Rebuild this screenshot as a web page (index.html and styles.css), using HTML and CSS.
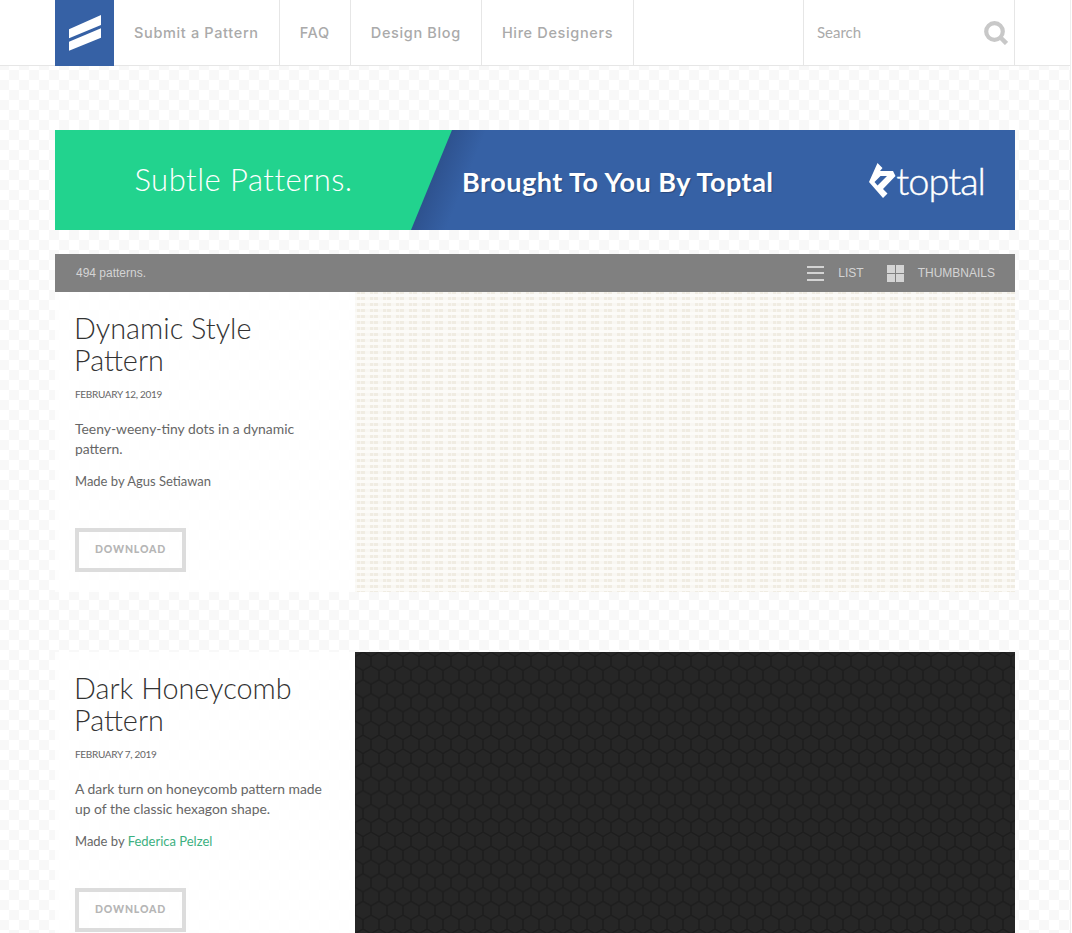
FILE: index.html
```html
<!DOCTYPE html>
<html lang="en">
<head>
<meta charset="utf-8">
<title>Subtle Patterns</title>
<link rel="stylesheet" href="styles.css">
</head>
<body>
<header class="topbar">
  <div class="topbar-inner">
    <a class="logo" href="#" aria-label="Subtle Patterns">
      <svg width="32" height="36" viewBox="0 0 32 36"><path d="M0 14.300 32 0V10L0 23.300ZM0 26.700 32 13.300V22.700L0 35.700Z" fill="#fff"/></svg>
    </a>
    <nav class="mainnav">
      <a href="#">Submit a Pattern</a>
      <a href="#">FAQ</a>
      <a href="#">Design Blog</a>
      <a href="#">Hire Designers</a>
    </nav>
    <div class="search">
      <span class="search-label">Search</span>
      <svg width="24" height="24" viewBox="0 0 24 24"><circle cx="10.500" cy="10.500" r="8.300" fill="none" stroke="#c8c8c8" stroke-width="4.200"/><path d="M16 16 22.500 22.500" stroke="#c8c8c8" stroke-width="4.500"/></svg>
    </div>
  </div>
</header>
<main class="page">
  <section class="banner">
    <div class="banner-left">Subtle Patterns.</div>
    <div class="banner-right">
      <span class="banner-tag">Brought To You By Toptal</span>
      <span class="toptal">
        <svg width="27" height="35" viewBox="3 4 27 35"><path fill-rule="evenodd" d="M11.500 4 16.500 9 14 12H27L29.500 17 17 30 21.500 34.500 17 39 3 23ZM14.500 17 8.500 23 11.500 26.500 21 17Z" fill="#fff"/></svg>
        <span class="toptal-word">toptal</span>
      </span>
    </div>
  </section>
  <section class="toolbar">
    <span class="count">494 patterns.</span>
    <div class="views">
      <span class="view">
        <svg width="17" height="15" viewBox="0 0 17 15"><path d="M0 0H17V2H0ZM0 6H17V8H0ZM0 13H17V15H0Z" fill="#d4d4d4"/></svg>
        LIST
      </span>
      <span class="view">
        <svg width="17" height="17" viewBox="0 0 17 17"><path d="M0 0H8V8H0ZM9 0H17V8H9ZM0 9H8V17H0ZM9 9H17V17H9Z" fill="#d4d4d4"/></svg>
        THUMBNAILS
      </span>
    </div>
  </section>
  <article class="pattern">
    <div class="info">
      <h2>Dynamic Style Pattern</h2>
      <p class="date">FEBRUARY 12, 2019</p>
      <p class="desc">Teeny-weeny-tiny dots in a dynamic pattern.</p>
      <p class="author">Made by Agus Setiawan</p>
      <a class="download" href="#">DOWNLOAD</a>
    </div>
    <div class="swatch dots"></div>
  </article>
  <article class="pattern">
    <div class="info">
      <h2>Dark Honeycomb Pattern</h2>
      <p class="date">FEBRUARY 7, 2019</p>
      <p class="desc">A dark turn on honeycomb pattern made up of the classic hexagon shape.</p>
      <p class="author">Made by <a href="#">Federica Pelzel</a></p>
      <a class="download" href="#">DOWNLOAD</a>
    </div>
    <div class="swatch honey">
      <svg width="660" height="300">
        <defs>
          <pattern id="hex" width="16" height="27.700" patternUnits="userSpaceOnUse">
            <path d="M0 4.600 8 0 16 4.600M0 4.600V13.800L8 18.500 16 13.800V4.600M8 18.500V27.700" fill="none" stroke="#1d1d1d" stroke-width="1.500"/>
          </pattern>
        </defs>
        <rect width="660" height="300" fill="url(#hex)"/>
      </svg>
    </div>
  </article>
</main>
</body>
</html>
```
FILE: styles.css
```css
* { box-sizing: border-box; }
html { background: #fff; }
html, body { margin: 0; height: 933px; overflow: hidden; }
body {
  width: 1071px;
  border-right: 1px solid #eee;
  font-family: "Lato", "Liberation Sans", sans-serif;
  color: #666;
  background-color: #fff;
  background-image: repeating-conic-gradient(#f8f8f8 0 25%, #fff 0 50%);
  background-size: 20px 20px;
  background-position: -1px 70px;
}
a { color: inherit; text-decoration: none; }
.topbar { height: 66px; background: #fff; border-bottom: 1px solid #e6e6e6; }
.topbar-inner { width: 960px; height: 65px; margin-left: 55px; display: flex; }
.logo { width: 59px; height: 66px; background: #3661a5; display: flex; align-items: center; justify-content: center; }
.mainnav { display: flex; }
.mainnav a {
  display: flex; align-items: center; padding: 0 20px;
  border-right: 1px solid #e6e6e6;
  color: #aaa; font-family: "Inter", "Liberation Sans", sans-serif; font-size: 14.500px; font-weight: 500; letter-spacing: .65px;
}
.search {
  margin-left: auto; width: 212px; display: flex; align-items: center; justify-content: space-between;
  padding: 0 6px 0 13px;
  border-left: 1px solid #e6e6e6; border-right: 1px solid #e6e6e6;
  color: #aaa; font-size: 15px;
}
.search-label { padding-bottom: 2px; }
.page { width: 960px; margin: 64px 0 0 55px; }
.banner { height: 100px; display: flex; position: relative; overflow: hidden;
  background: linear-gradient(112deg, #2e528f 368px, #3661a5 400px);
}
.banner-left {
  width: 397px; background: #22d38e;
  clip-path: polygon(0 0, 100% 0, 356px 100%, 0 100%);
  color: #fff; font-size: 31px; font-weight: 300; letter-spacing: .5px;
  display: flex; align-items: center; justify-content: center; padding: 0 20px 2px 0;
}
.banner-right { flex: 1; display: flex; align-items: center; justify-content: space-between; padding: 0 30px 0 10px; }
.banner-tag { color: #fff; font-size: 27px; font-weight: 700; letter-spacing: .5px; padding-top: 3px; text-shadow: 1px 1px 1px rgba(0,0,0,.25); }
.toptal { display: flex; align-items: center; gap: 0; color: #fff; }
.toptal-word { font-size: 38px; font-weight: 300; letter-spacing: -1px; -webkit-text-stroke: .4px #fff; }
.toolbar {
  margin-top: 24px; height: 38px; background: #808080; color: #d4d4d4;
  font-family: "Liberation Sans", Arial, sans-serif; font-size: 12px;
  display: flex; align-items: center; justify-content: space-between; padding: 0 20px 0 21px;
}
.views { display: flex; gap: 23px; }
.view { display: flex; align-items: center; gap: 14px; }
.pattern { display: flex; height: 300px; margin-bottom: 60px; }
.info { width: 300px; background: rgba(255,255,255,.8); padding: 20px 20px 0; flex: none; }
h2 { margin: 0 0 0 -1px; font-size: 28.800px; line-height: 32px; font-weight: 300; color: #333; }
.date { margin: 10px 0 0; font-size: 10px; line-height: 16px; letter-spacing: -.3px; color: #666; }
.desc { margin: 17px 0 0; font-size: 13.900px; line-height: 20px; }
.author { margin: 12px 0 0; font-size: 13px; line-height: 20px; }
.author a { color: #3cb07f; }
.download {
  display: flex; align-items: center; justify-content: center;
  width: 111px; height: 44px; margin-top: 37px; padding-bottom: 3px;
  border: 4px solid #dcdcdc; color: #b5b5b5; font-size: 10.500px; font-weight: 900; letter-spacing: .8px;
}
.swatch { width: 660px; height: 300px; flex: none; }
.dots {
  background-color: #fcfbf8;
  background-image:
    repeating-linear-gradient(90deg, transparent 0 3px, rgba(252,251,248,.6) 3px 4px, transparent 4px 8px, rgba(252,251,248,.75) 8px 13px),
    repeating-linear-gradient(0deg, #f0ece2 0 3px, transparent 3px 6px);
  background-position: 2px 0, 0 2px;
}
.honey { background: #262626; }
.honey svg { display: block; }
```
